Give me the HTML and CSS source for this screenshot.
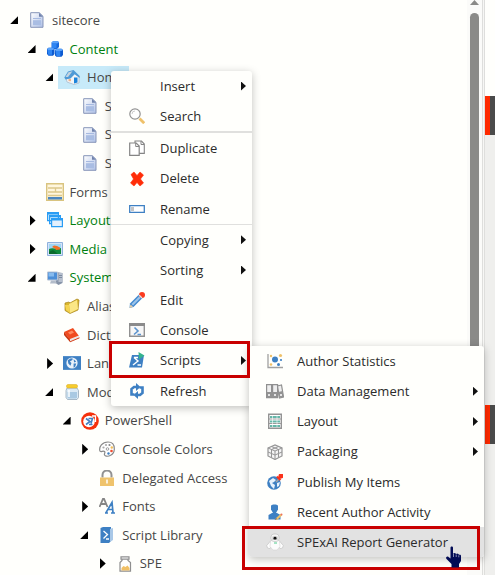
FILE: index.html
```html
<!DOCTYPE html>
<html lang="en">
<head>
<meta charset="utf-8">
<title>Content Editor</title>
<link rel="stylesheet" href="styles.css">
</head>
<body>
<svg class="defs" aria-hidden="true">
  <linearGradient id="paper" x1="0" y1="0" x2="1" y2="1"><stop offset="0" stop-color="#fff"/><stop offset="1" stop-color="#aec0e6"/></linearGradient>
  <symbol id="doc" viewBox="0 0 16 16"><path d="M1.700.7h8.600l3.700 3.600v11H1.700z" fill="url(#paper)" stroke="#8795b8"/><path d="M10 .8v4h4z" fill="#7183ad"/><path d="M4 6.500h8" stroke="#a6b9e0"/><path d="M4 8.200h8v5H4z" fill="#a9bde3"/></symbol>
  <symbol id="cubes" viewBox="0 0 16 16"><path d="M4.500 1.500L6 .3h5l1 1.200V6l-2 2H5L4.500 7z" fill="#1769dd"/><path d="M0 8l1.500-1.200H6L7.500 8v5L6 14.800H1.500L0 13zM8 9l1.500-1.200H14.500L16 9v5l-1.500 1.800h-5L8 14.500z" fill="#0d5bd0"/><path d="M4.500 1.500L6 .3h5l1 1.200-2 1H5.500zM0 8l1.500-1.200H6L7.500 8 6 9H1zM8 9l1.500-1.200H14.500L16 9l-1.500 1H9z" fill="#5aa3fa"/><path d="M5 2.500h4.500V7H5zM.5 9H5v4.800H1.200zM8.500 10h4.800v5H9.500z" fill="#2f86f3"/></symbol>
  <symbol id="home" viewBox="0 0 16 16"><path d="M2 9l8-5 5 4v6l-5 1.500L3 13z" fill="#f2f5f8" stroke="#a5b5c5" stroke-width=".7"/><path d="M.3 8.500L4 2.500 9.500 1 15.700 7v2l-5-3.800L6.500 9.500 1.500 10.500z" fill="#4f9ad6"/><path d="M1.500 8L4.500 3.300 8.500 2.200 4 8z" fill="#c5d3df"/><path d="M10 8.500h3.500v5L10 14.500z" fill="#1b83da"/><path d="M4.500 10H7v2.200H4.500z" fill="#f0b48a"/></symbol>
  <symbol id="forms" viewBox="0 0 18 18"><path d="M.7.7h16.6v16.6H.7z" fill="#fff6dd" stroke="#d9c47f" stroke-width="1.4"/><path d="M2 5h14M2 9h14M2 12.5h14M9.500 5v4" stroke="#dcc88b" stroke-width="1.300"/><path d="M2 14h14v2.500H2z" fill="#4c86bf"/></symbol>
  <symbol id="windows" viewBox="0 0 16 16"><path d="M.6.6h10.8v8H.6zM2.600 3.600h10.800v8H2.600z" fill="#d6efff" stroke="#2a9df4" stroke-width="1.200"/><path d="M4.600 6.600h10.800v8H4.600z" fill="#e4f0fc" stroke="#2a9df4" stroke-width="1.200"/><path d="M.5.5h11v2H.5zM2.500 3.500h11v1.700h-11zM4.500 6.500h11v2h-11z" fill="#2a9df4"/></symbol>
  <symbol id="media" viewBox="0 0 16 16"><path d="M.5 1.500h15v13H.5z" fill="#d4e4f8" stroke="#8fb0dc"/><path d="M2 3h12v10H2z" fill="#9fd6f4"/><path d="M2 8c4-2 8 1 12-1v6H2z" fill="#0e8a3b"/><path d="M5 6l2-1.500 3 .5 3 1.500v2L9 9 8 7.500z" fill="#f07026"/><path d="M2 11l4-2 5 4H2z" fill="#096a2b"/></symbol>
  <symbol id="system" viewBox="0 0 16 16"><path d="M9 2l6.500 1v10l-4 2-3-2z" fill="#8794a8"/><path d="M11.500 3h4v9h-4z" fill="#b6bfcd"/><path d="M.5 2h10v8H.5z" fill="#4c8fd8" stroke="#b5c2d4"/><path d="M1.500 3h5.500v3.500H1.500z" fill="#86bbee"/><path d="M4 10.500h4l2 3H3z" fill="#b3bcc9"/><path d="M12 5.500h3M12 7.500h3" stroke="#6f7f95" stroke-width=".8"/></symbol>
  <symbol id="folder" viewBox="0 0 16 16"><path d="M1 5l4-1 1 1 7-4 2 1-1 10-8 3.500-5-3z" fill="#d9b62e" stroke="#a68218" stroke-width=".7"/><path d="M5 6l8-4 1 9-8 4z" fill="#fbe786"/><path d="M1 7h4l1 8-4-3z" fill="#f5d450"/></symbol>
  <symbol id="book" viewBox="0 0 16 16"><path d="M0 5l9-4 6 8-9 4z" fill="#f04b20"/><path d="M6 12l9-3.500v2.500l-9 4z" fill="#ece6e4"/><path d="M0 5l6 7.500v2.500L0 8z" fill="#c9360f"/><path d="M6 14.800l9.500-4" stroke="#d6401a"/><path d="M4 5.500l4-2 2 2-4 2z" fill="#ff8a60"/></symbol>
  <symbol id="globe" viewBox="0 0 17 13"><path d="M0 0h17v13H0z" fill="#3e80c3"/><circle cx="8.500" cy="6.500" r="5.300" fill="#e9f1fa"/><path d="M4.500 4l3-2 2 .5-1 1.500-2 1 1.500 1.500-1 2.500-2-2zM10 3l2.500 2-2 1zM10 7h2.500l-1 3-1.500 1z" fill="#3e80c3"/></symbol>
  <symbol id="jar" viewBox="0 0 16 16"><path d="M3 4h10l1.500 2.500v7L13 15.500H3.500L2 13.500v-7z" fill="#dbeaf5" stroke="#96a9ba" stroke-width=".8"/><path d="M3.500 8H13v5.500l-1 1H4.500l-1-1z" fill="#a9c9e2"/><path d="M5 6v7" stroke="#fff" stroke-width="1.500"/><rect x="2.500" y=".5" width="11" height="3.500" rx="1.500" fill="#f6cc2d" stroke="#d9a81a" stroke-width=".5"/></symbol>
  <symbol id="shell" viewBox="0 0 18 18"><circle cx="9" cy="9" r="8.800" fill="#f5300c"/><circle cx="8" cy="9.500" r="5.800" fill="#fff"/><path d="M11 4h3.500v6" fill="none" stroke="#fff" stroke-width="1.300"/><path d="M5 6.500l4 3L5 12.500M8 12.500h3.500M7.500 6.500h4l-1.500 5" fill="none" stroke="#447fc0" stroke-width="1.600"/></symbol>
  <symbol id="palette" viewBox="0 0 16 16"><path d="M9 1C3 1 0 6 .8 9.500 1.500 12 4 9 5.500 10.500 7 12 4 13 6 14.500c3 2 9-.5 9.300-6C15.500 3 13 1 9 1z" fill="#fff" stroke="#898989" stroke-width="1.200"/><circle cx="4.500" cy="6.500" r="1.100" fill="#aaa"/><circle cx="7" cy="4" r="1.100" fill="#aaa"/><circle cx="10.500" cy="4" r="1.100" fill="#888"/><circle cx="12.800" cy="6.500" r="1.200" fill="#f2bd54"/><circle cx="12.500" cy="10" r="1.300" fill="#f14c2e"/><circle cx="9.500" cy="12.500" r="1.200" fill="#3e80c3"/><circle cx="8.500" cy="8" r="1.300" fill="#fff" stroke="#888" stroke-width=".8"/></symbol>
  <symbol id="lock" viewBox="0 0 16 16"><path d="M3.500 7.500V5a4.500 4.500 0 019 0v2.500" fill="none" stroke="#929292" stroke-width="2"/><path d="M1 7.500h14V16H1z" fill="#efc36c"/><path d="M8 9.500v4" stroke="#fff" stroke-width="1.500"/></symbol>
  <symbol id="fonts" viewBox="0 0 16 16"><path d="M.5 9L4 .8h1L8.500 9M2 6h5" fill="none" stroke="#858585" stroke-width="1.800"/><path d="M7 14.600L13 4.500l1 10.100M9.500 11.500h4.200M6 15h3M12 15h4" fill="none" stroke="#3e80c3" stroke-width="1.700"/></symbol>
  <symbol id="library" viewBox="0 0 16 16"><path d="M1.500 1L4 0h8v14l-2 2H1.500z" fill="#3e80c3"/><path d="M11 2l3-1v12l-3 2z" fill="#a9c8e7"/><path d="M4.500 4l4 3.500-4 4M7 12h3" fill="none" stroke="#fff" stroke-width="1.300"/></symbol>
  <symbol id="spe" viewBox="0 0 16 16"><path d="M4 .8h8v2.400H4zM5 3.500v1L3 6.500v8.700h10.500V6.500L11 4.500v-1" fill="#fff" stroke="#8f8f8f" stroke-width="1.200"/><path d="M4.500 12l2-2 2 1 2-1.500 2 2.500v2.500h-8z" fill="#f1c066"/></symbol>
  <symbol id="search" viewBox="0 0 16 16"><path d="M10.500 10.500l4.700 4.700" stroke="#efc16a" stroke-width="2.800"/><circle cx="6" cy="6" r="5.200" fill="#fff" stroke="#929292" stroke-width="1.200"/><path d="M3 6a3 3 0 013-3" fill="none" stroke="#ccc"/></symbol>
  <symbol id="copy" viewBox="0 0 16 16"><path d="M6 3V1h6.500L15.300 4v9.400H10" fill="#fff" stroke="#858585" stroke-width="1.100"/><path d="M12 1v3.500h3" fill="none" stroke="#858585"/><path d="M.7 3h6.500l3 3v9.300H.7z" fill="#fff" stroke="#858585" stroke-width="1.200"/><path d="M6.700 3v3.500h3.300" fill="none" stroke="#858585"/></symbol>
  <symbol id="delete" viewBox="0 0 16 16"><path d="M2 3.500l3-2.500L8 4.500 11 1l3.500 3-3 4 3 4-3.500 3-3-3.500L5 15l-3.500-3 3-4z" fill="#ff2d08" stroke="#ff2d08" stroke-width=".6"/></symbol>
  <symbol id="rename" viewBox="0 0 16 16"><path d="M.7 4.700h14.600v6.600H.7z" fill="#fff" stroke="#3e80c3" stroke-width="1.300"/><path d="M2 6h3v4H2z" fill="#c4c4c4"/></symbol>
  <symbol id="edit" viewBox="0 0 16 16"><path d="M1 11.500L11 1.500l3.500 3.500-10 10L.5 16z" fill="#4389ce"/><path d="M2.500 12L11 3.500l1.500 1.500L4 13.500z" fill="#9cc4e9"/><path d="M.5 16l1-3.500 2.500 2.300z" fill="#e8cda4"/><circle cx="13" cy="3" r="3" fill="#fb3b1e"/><path d="M10 3l3 3" stroke="#dedede" stroke-width="1.200"/></symbol>
  <symbol id="console" viewBox="0 0 16 16"><path d="M.7 1.700h14.600v12.600H.7z" fill="#f6f6f6" stroke="#919191" stroke-width="1.400"/><path d="M0 1h16v3H0z" fill="#8b8b8b"/><path d="M5.500 5.500L9 9l-4 3.500M8.500 12.500H12" fill="none" stroke="#5b93cd" stroke-width="1.600"/></symbol>
  <symbol id="scripts" viewBox="0 0 16 16"><path d="M3 3h12l-2 12.500H0z" fill="#3e80c3"/><path d="M5 5.500l4 3.500-5 4M8.500 13H12M5 5.500h4" fill="none" stroke="#fff" stroke-width="1.400"/><path d="M9.500 0l6 3.500-5.500 4z" fill="#35b38d"/></symbol>
  <symbol id="refresh" viewBox="0 0 16 16"><path d="M5.500 11.500H2.500V6L5 4h3M10.500 4.500h3V10L11 12H8" fill="none" stroke="#3e80c3" stroke-width="2.600"/><path d="M7 0l4.500 4L7 8zM9 8l-4.500 4L9 16z" fill="#3e80c3"/></symbol>
  <symbol id="stats" viewBox="0 0 16 16"><path d="M1 1v13.500h15" fill="none" stroke="#a1a1a1" stroke-width="1.300"/><circle cx="8" cy="6.500" r="3" fill="#3e80c3"/><circle cx="4" cy="3" r="1.200" fill="#efc16a"/><circle cx="4" cy="11.500" r="1.300" fill="#efc16a"/><circle cx="13.500" cy="2.500" r="1.600" fill="#efc16a"/><circle cx="14" cy="7" r="1.100" fill="#3e80c3"/><circle cx="11.500" cy="11.500" r="1.500" fill="#3e80c3"/></symbol>
  <symbol id="binders" viewBox="0 0 18 16"><path d="M.6 1.600h5v13h-5zM6.600 1.600h5v13h-5zM11.500 3l4-1 2 12-4 1z" fill="#eee" stroke="#909090" stroke-width="1.200"/><path d="M1 9h10v5.500H1zM12.500 9l4-1 1 6-4 1z" fill="#929292"/><circle cx="3" cy="12" r="1" fill="#fff"/><circle cx="9" cy="12" r="1" fill="#fff"/><circle cx="15" cy="12" r="1" fill="#fff"/></symbol>
  <symbol id="rack" viewBox="0 0 16 16"><path d="M1.700 1.200h12.600v14H1.700z" fill="#fff" stroke="#949494" stroke-width="1.400"/><path d="M3 4h10M3 8.500h10M3 13h10" stroke="#66b7a8" stroke-width="2"/><path d="M2 6h12M2 10.500h12" stroke="#9b9b9b" stroke-width="1.200"/><path d="M5.500 2v12M10 2v12" stroke="#fff" stroke-width=".6"/></symbol>
  <symbol id="package" viewBox="0 0 16 16"><path d="M1 4l7-3 7 3v8l-7 3.500L1 12z" fill="#f4f4f4" stroke="#969696" stroke-width="1.200"/><path d="M1 4l7 3 7-3M8 7v8.500M1 8l7 3 7-3M4.500 5.500v8M11.500 5.500v8M4.500 2.500l7 3M11.500 2.500l-7 3" fill="none" stroke="#969696" stroke-width="1"/></symbol>
  <symbol id="publish" viewBox="0 0 16 16"><circle cx="7" cy="9" r="6.800" fill="#3e80c3"/><path d="M2 7l4-3 3 2-2 2-2 1 3 2-1 4-3-3zM10 9l3-1-1 4-2 1z" fill="#e7f2fc"/><path d="M9 8l4-4" stroke="#a5a5a5" stroke-width="1.400"/><circle cx="14" cy="2" r="2.500" fill="#fb321a"/><path d="M10 2.500l3.500 3.500" stroke="#fb321a" stroke-width="2.300"/></symbol>
  <symbol id="author" viewBox="0 0 16 16"><path d="M4 1.500C5 0 10 0 11 1.500v4L9 9H6L4 5.500z" fill="#3e80c3"/><path d="M1.500 15.500V11L5 9h5l3.500 2v4.500z" fill="#3e80c3"/><path d="M9 15.500l5.500-5" stroke="#efc16a" stroke-width="2.200"/><path d="M7.500 16l1.500-2 1 1z" fill="#666"/><circle cx="14.500" cy="10.500" r="1" fill="#ed705d"/></symbol>
  <symbol id="robot" viewBox="0 0 18 18"><path d="M4.500 8L.8 12.500l.7 2.500 2.500.5L6 12zM13.500 8l3.700 4.500-.7 2.500-2.500.5L12 12z" fill="#fff" stroke="#bdbdbd" stroke-width=".6"/><path d="M4.500 7.500h9l.5 6-3 3.500H7l-3-3.500z" fill="#fcfcfc" stroke="#cdcdcd" stroke-width=".5"/><rect x="5" y="1" width="8" height="7.500" rx="3" fill="#f6f6f6" stroke="#b8b8b8" stroke-width=".6"/><path d="M6.500 3.500h5V7h-5z" fill="#bcbcbc"/><circle cx="9" cy="5.200" r="1.400" fill="#111"/><path d="M8 10h3" stroke="#88ddb2" stroke-width="1.500"/></symbol>
</svg>
<div class="app">
  <nav class="tree" aria-label="Content tree">
    <ul>
      <li><div class="row"><button class="toggle open" aria-label="Collapse"></button><a href="#"><svg class="icon"><use href="#doc"/></svg>sitecore</a></div>
        <ul>
          <li><div class="row"><button class="toggle open" aria-label="Collapse"></button><a href="#" class="green"><svg class="icon"><use href="#cubes"/></svg>Content</a></div>
            <ul>
              <li><div class="row"><button class="toggle open" aria-label="Collapse"></button><a href="#" class="selected"><svg class="icon"><use href="#home"/></svg>Home</a></div>
                <ul>
                  <li><div class="row"><a href="#"><svg class="icon"><use href="#doc"/></svg>S</a></div></li>
                  <li><div class="row"><a href="#"><svg class="icon"><use href="#doc"/></svg>S</a></div></li>
                  <li><div class="row"><a href="#"><svg class="icon"><use href="#doc"/></svg>S</a></div></li>
                </ul>
              </li>
            </ul>
          </li>
          <li><div class="row"><a href="#"><svg class="icon large"><use href="#forms"/></svg>Forms</a></div></li>
          <li><div class="row"><button class="toggle" aria-label="Expand"></button><a href="#" class="green"><svg class="icon"><use href="#windows"/></svg>Layout</a></div></li>
          <li><div class="row"><button class="toggle" aria-label="Expand"></button><a href="#" class="green"><svg class="icon"><use href="#media"/></svg>Media</a></div></li>
          <li><div class="row"><button class="toggle open" aria-label="Collapse"></button><a href="#" class="green"><svg class="icon"><use href="#system"/></svg>System</a></div>
            <ul>
              <li><div class="row"><a href="#"><svg class="icon"><use href="#folder"/></svg>Aliases</a></div></li>
              <li><div class="row"><a href="#"><svg class="icon"><use href="#book"/></svg>Dictionary</a></div></li>
              <li><div class="row"><button class="toggle" aria-label="Expand"></button><a href="#"><svg class="icon large"><use href="#globe"/></svg>Languages</a></div></li>
              <li><div class="row"><button class="toggle open" aria-label="Collapse"></button><a href="#"><svg class="icon"><use href="#jar"/></svg>Modules</a></div>
                <ul>
                  <li><div class="row"><button class="toggle open" aria-label="Collapse"></button><a href="#"><svg class="icon large"><use href="#shell"/></svg>PowerShell</a></div>
                    <ul>
                      <li><div class="row"><button class="toggle" aria-label="Expand"></button><a href="#"><svg class="icon"><use href="#palette"/></svg>Console Colors</a></div></li>
                      <li><div class="row"><a href="#"><svg class="icon"><use href="#lock"/></svg>Delegated Access</a></div></li>
                      <li><div class="row"><button class="toggle" aria-label="Expand"></button><a href="#"><svg class="icon"><use href="#fonts"/></svg>Fonts</a></div></li>
                      <li><div class="row"><button class="toggle open" aria-label="Collapse"></button><a href="#"><svg class="icon"><use href="#library"/></svg>Script Library</a></div>
                        <ul>
                          <li><div class="row"><button class="toggle" aria-label="Expand"></button><a href="#"><svg class="icon"><use href="#spe"/></svg>SPE</a></div></li>
                        </ul>
                      </li>
                    </ul>
                  </li>
                </ul>
              </li>
            </ul>
          </li>
        </ul>
      </li>
    </ul>
  </nav>
  <div class="scrollbar"><span class="scroll-up"></span><span class="thumb"></span></div>
  <div class="splitter"></div>
  <div class="editor"><div class="tab"></div><div class="fill"></div><div class="tab"></div><div class="fill rest"></div></div>
</div>

<div class="menu context" role="menu">
  <button role="menuitem" class="more"><span class="icon"></span>Insert</button>
  <button role="menuitem"><svg class="icon"><use href="#search"/></svg>Search</button>
  <hr class="thick">
  <button role="menuitem"><svg class="icon"><use href="#copy"/></svg>Duplicate</button>
  <button role="menuitem"><svg class="icon"><use href="#delete"/></svg>Delete</button>
  <button role="menuitem"><svg class="icon"><use href="#rename"/></svg>Rename</button>
  <hr>
  <button role="menuitem" class="more"><span class="icon"></span>Copying</button>
  <button role="menuitem" class="more"><span class="icon"></span>Sorting</button>
  <button role="menuitem"><svg class="icon"><use href="#edit"/></svg>Edit</button>
  <button role="menuitem"><svg class="icon"><use href="#console"/></svg>Console</button>
  <button role="menuitem" class="more"><svg class="icon"><use href="#scripts"/></svg>Scripts</button>
  <button role="menuitem"><svg class="icon"><use href="#refresh"/></svg>Refresh</button>
</div>
<div class="menu submenu" role="menu">
  <button role="menuitem"><svg class="icon"><use href="#stats"/></svg>Author Statistics</button>
  <button role="menuitem" class="more"><svg class="icon large"><use href="#binders"/></svg>Data Management</button>
  <button role="menuitem" class="more"><svg class="icon"><use href="#rack"/></svg>Layout</button>
  <button role="menuitem" class="more"><svg class="icon"><use href="#package"/></svg>Packaging</button>
  <button role="menuitem"><svg class="icon"><use href="#publish"/></svg>Publish My Items</button>
  <button role="menuitem"><svg class="icon"><use href="#author"/></svg>Recent Author Activity</button>
  <button role="menuitem" class="hover"><svg class="icon large"><use href="#robot"/></svg>SPExAI Report Generator</button>
</div>
<div class="mark mark-scripts"></div>
<div class="mark mark-report"></div>
<svg class="pointer" viewBox="0 0 16 22" aria-hidden="true"><path d="M5 1.500C5 0 7.500 0 7.500 1.500V8l1-1 1.500.3.500 1 1-.8 1.500.5.500 1 1-.4 1 1V15l-2 3v3.500H6V18L.8 12.800C0 11 2 10 3 11l2 1.500z" fill="#020b55"/><path d="M8 8v3M10.700 8.500V11M13.300 9.300v2" stroke="#dfe2f3" stroke-width=".6"/></svg>
</body>
</html>
```
FILE: styles.css
```css
* { box-sizing: border-box; }

body {
  margin: 0;
  background: #fffffc;
  color: #474747;
  font: 13px/2.2 "Open Sans", "Noto Sans", sans-serif;
  overflow: hidden;
}

button {
  border: 0;
  padding: 0;
  background: none;
  color: inherit;
  font: inherit;
}

.defs { position: absolute; width: 0; height: 0; }

.icon { width: 16px; height: 16px; flex: none; }
.icon.large { width: 18px; height: 18px; margin: 0 -1px; }

.app { display: flex; height: 100vh; }

/* Content tree */
.tree { flex: 1; overflow: hidden; padding: 6px 0 0 9px; }
.tree ul { list-style: none; margin: 0; padding: 0; }
.tree li ul { padding-left: 1.35em; }

.row { display: flex; align-items: center; height: 2.2em; }
.row a {
  display: flex;
  align-items: center;
  gap: 7px;
  height: 23px;
  padding: 0 5px 0 6px;
  color: inherit;
  text-decoration: none;
}
.row a:first-child { margin-left: 14px; }
.row a.green { color: #007f0e; }
.row a.selected { background: #c7eaf9; }

.toggle { width: 12px; height: 12px; margin-right: 2px; padding-left: 3px; }
.toggle::before {
  content: "";
  display: block;
  width: 6px;
  height: 11px;
  background: #000;
  clip-path: polygon(0 0, 100% 50%, 0 100%);
}
.toggle.open { padding-left: 1px; }
.toggle.open::before {
  width: 8px;
  height: 8px;
  clip-path: polygon(100% 0, 100% 100%, 0 100%);
}

/* Scrollbar, splitter and the edge of the editor */
.scrollbar {
  display: flex;
  flex-direction: column;
  align-items: center;
  width: 15px;
  background: #fbfbf9;
}
.scroll-up {
  width: 9px;
  height: 5px;
  margin-bottom: 8px;
  background: #8a8a88;
  clip-path: polygon(50% 0, 100% 100%, 0 100%);
}
.thumb { width: 9px; height: 70%; border-radius: 5px; background: #8a8a88; }
.splitter {
  width: 3px;
  background: #f7f7f5;
  border: solid #dededc;
  border-width: 0 1px;
}
.editor { display: flex; flex-direction: column; width: 10px; padding-top: 96px; }
.tab { height: 39px; border-left: 5px solid #ff2a00; background: #4a4a4a; }
.fill { height: 270px; background: #efefed; }
.fill.rest { height: auto; flex: 1; }

/* Menus */
.menu {
  position: absolute;
  background: #fffffc;
  color: #2b2b2b;
  line-height: 2.32;
  border-radius: 3px;
  box-shadow: 0 2px 8px rgba(0, 0, 0, .25);
}
.context { left: 111px; top: 71px; width: 141px; }
.submenu { left: 249px; top: 346px; width: 235px; }

.menu button {
  display: flex;
  align-items: center;
  gap: 15px;
  width: 100%;
  height: 2.32em;
  padding: 0 6px 0 18px;
  white-space: nowrap;
}
.submenu button { gap: 14px; }
.menu .hover { background: #e2e2e2; border-radius: 0 0 3px 3px; }
.more::after {
  content: "";
  width: 5px;
  height: 9px;
  margin-left: auto;
  background: #111;
  clip-path: polygon(0 0, 100% 50%, 0 100%);
}
.menu hr { margin: 0; border: 0; height: 1px; background: #e0e0de; }
.menu hr.thick { height: 2px; }

/* Highlight frames */
.mark { position: absolute; border: 3px solid #c90000; }
.mark-scripts { left: 109px; top: 341px; width: 141px; height: 37px; }
.mark-report { left: 242px; top: 526px; width: 238px; height: 44px; }

.pointer { position: absolute; left: 445px; top: 546px; width: 17px; height: 22px; }
```
